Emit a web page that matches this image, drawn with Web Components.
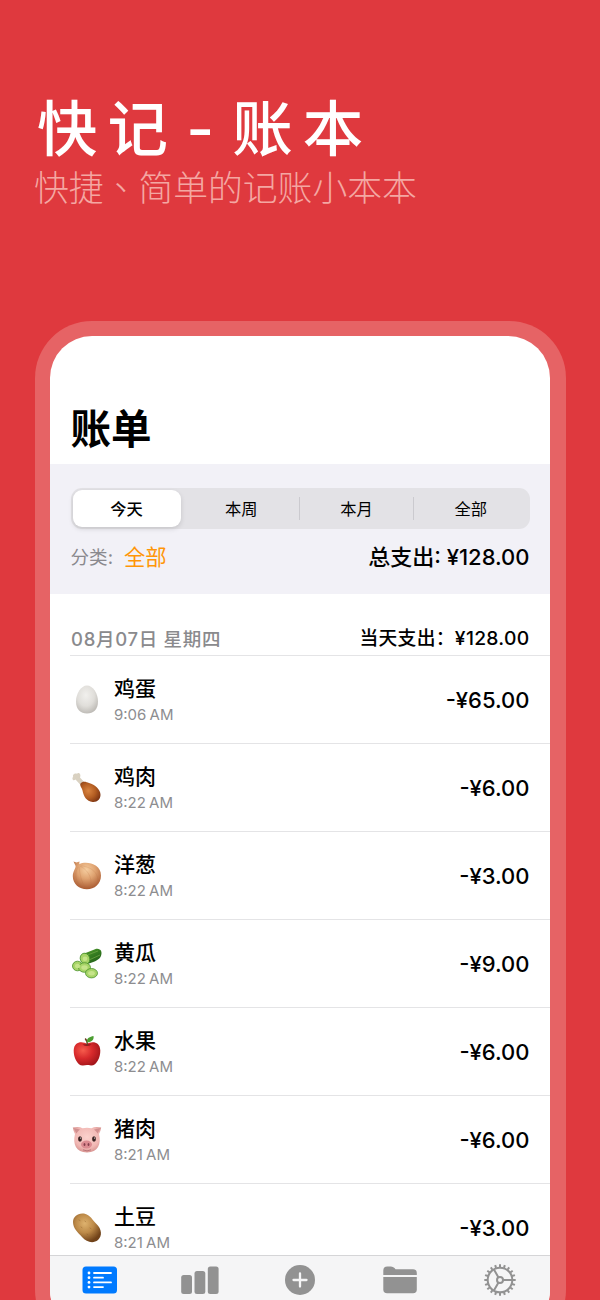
<!DOCTYPE html>
<html lang="zh-CN">
<head>
<meta charset="UTF-8">
<title>快记 - 账本</title>
<style>
    html, body {
        margin: 0;
        width: 600px;
        height: 1300px;
        overflow: hidden;
    }

    body {
        background: #df393e;
        color: #000;
        font-family: Inter, "Noto Sans CJK SC", sans-serif;
    }
</style>
</head>
<body>
<promo-page>
    <promo-title slot="title" heading="快记 - 账本" subtitle="快捷、简单的记账小本本"></promo-title>
    <phone-frame>
        <page-heading>账单</page-heading>
        <filter-panel total="¥128.00" category="全部"></filter-panel>
        <day-header total="¥128.00">08月07日 星期四</day-header>
        <bill-row icon="egg" name="鸡蛋" time="9:06 AM" amount="-¥65.00"></bill-row>
        <bill-row icon="leg" name="鸡肉" time="8:22 AM" amount="-¥6.00"></bill-row>
        <bill-row icon="onion" name="洋葱" time="8:22 AM" amount="-¥3.00"></bill-row>
        <bill-row icon="cucumber" name="黄瓜" time="8:22 AM" amount="-¥9.00"></bill-row>
        <bill-row icon="apple" name="水果" time="8:22 AM" amount="-¥6.00"></bill-row>
        <bill-row icon="pig" name="猪肉" time="8:21 AM" amount="-¥6.00"></bill-row>
        <bill-row icon="potato" name="土豆" time="8:21 AM" amount="-¥3.00"></bill-row>
        <tab-bar slot="tabs"></tab-bar>
    </phone-frame>
</promo-page>

<script>
// 食物图标，统一 30x30 画布
const FOOD = {
    egg: `
        <defs><radialGradient id="g" cx=".45" cy=".35" r=".7"><stop offset="0" stop-color="#f1f0ed"/><stop offset=".55" stop-color="#e0deda"/><stop offset="1" stop-color="#b9b6b1"/></radialGradient></defs>
        <path d="M15 .5C21 .5 26 8.500 26 16.500S21.500 28.500 15 28.500 4 24.500 4 16.500 9 .5 15 .5Z" fill="url(#g)"/>`,
    leg: `
        <defs><radialGradient id="g" cx=".4" cy=".45" r=".65"><stop offset="0" stop-color="#d98440"/><stop offset=".55" stop-color="#b35d22"/><stop offset="1" stop-color="#7c3412"/></radialGradient></defs>
        <path d="M3.500 6.500 9.500 13l3.500-3L8 4.500C9.600 1.500 6.500-1.300 5 .8 2.700-.4.1 2 1.200 3.800-.7 6 1.500 8.600 3.500 6.500Z" fill="#d9d1c1"/>
        <path d="M8.500 10.500C10.500 7.800 14 8.500 17 10 23 11.500 28.500 16.500 28.500 21.800 28.500 26.500 25 29.500 20.600 29 14.500 28.500 11.500 23 10.500 17.500 10 14.800 7.500 13 8.500 10.500Z" fill="url(#g)"/>`,
    onion: `
        <defs><radialGradient id="g" cx=".48" cy=".3" r=".7"><stop offset="0" stop-color="#f6cea0"/><stop offset=".45" stop-color="#e0a472"/><stop offset="1" stop-color="#a95a31"/></radialGradient></defs>
        <path d="M1.500.5 4.500 1.500 7.500.5 7.300 3.200C14-.2 29 2.500 29 14.500 29 23 22.500 28.300 14.900 28.300S.8 23 .8 15.300C.8 10.500 3.800 7.500 3.600 5Z" fill="url(#g)"/>
        <g fill="none" stroke="#b66b3c" stroke-width=".5" opacity=".35"><path d="M6 6C1 15 5 23 12 28M7 5.500C8 15 10 24 15 28M8 5C18 10 21 20 18 28M9 4.800C22 6 28 15 25 23"/></g>`,
    cucumber: `
        <defs><linearGradient id="g" x1="0" y1="0" x2=".7" y2="1"><stop offset="0" stop-color="#6cad39"/><stop offset=".4" stop-color="#3a8422"/><stop offset="1" stop-color="#1f5c18"/></linearGradient></defs>
        <path d="M11 5 23 .2C28-1.500 31.300 2.500 28.500 8 26.500 11.500 21 13 14.500 15.500Z" fill="url(#g)"/>
        <path d="M14 6.500 26 2M17 11l11-5" stroke="#76aa49" stroke-width=".7"/>
        <g fill="#a7d467" stroke="#4a922c" stroke-width=".8"><ellipse cx="13" cy="9.700" rx="4.700" ry="5.600" transform="rotate(-20 13 9.700)"/><ellipse cx="5.500" cy="17" rx="5" ry="4.800"/><ellipse cx="12.500" cy="18.500" rx="6" ry="4.800"/><ellipse cx="19.500" cy="24.200" rx="6" ry="4.700"/></g>
        <g fill="#c6e48a"><circle cx="13" cy="9.700" r="2.300"/><ellipse cx="5.500" cy="17" rx="2.600" ry="2.200"/><ellipse cx="12.500" cy="18.500" rx="3.200" ry="2.300"/><ellipse cx="19.500" cy="24.200" rx="3.300" ry="2.200"/></g>`,
    apple: `
        <defs><radialGradient id="g" cx=".35" cy=".35" r=".7"><stop offset="0" stop-color="#f65c4c"/><stop offset=".5" stop-color="#d82a2c"/><stop offset="1" stop-color="#a3151a"/></radialGradient></defs>
        <path d="M15 7C18 4.500 28 3 28.300 13.500 28.500 20.500 24.500 28.800 19 28.500 17 28.300 16.500 28 15 28S12.500 28.300 11 28.500C5.500 28.800 1.500 20.500 1.700 13.500 2 3 12 4.500 15 7Z" fill="url(#g)"/>
        <path d="M10.500 7.500Q15 10.500 19.500 7.500 16 6.500 10.500 7.500Z" fill="#97171c"/>
        <path d="M15.300 8.500Q15.500 4 13.200 1.500" stroke="#6b3e22" stroke-width="1.500" fill="none"/>
        <path d="M14.800 5.500C14.500.8 18 0 21.500-.9 22.500 3.500 18.500 5.600 14.800 5.500Z" fill="#4c9e32"/>`,
    pig: `
        <defs><radialGradient id="g" cx=".5" cy=".4" r=".65"><stop offset="0" stop-color="#fbd2cd"/><stop offset=".65" stop-color="#f1b8b4"/><stop offset="1" stop-color="#d18b88"/></radialGradient></defs>
        <path d="M.8 2.500Q7 1 10.500 3.200 15 2.200 19.500 3.200 23 1 29.200 2.500 28.500 6.500 27 9C29.500 19 26 27.500 15 27.500S.5 19 3 9Q1.500 6.500.8 2.500Z" fill="url(#g)"/>
        <path d="M1.800 3.300 8 4.500Q6 6 4.300 8.500ZM28.200 3.300 22 4.500Q24 6 25.700 8.500Z" fill="#d18f8f"/>
        <ellipse cx="8" cy="14" rx="1.900" ry="2.700" fill="#392322"/><ellipse cx="22" cy="14" rx="1.900" ry="2.700" fill="#392322"/>
        <circle cx="8.500" cy="13" r=".6" fill="#fff"/><circle cx="22.500" cy="13" r=".6" fill="#fff"/>
        <ellipse cx="14.500" cy="19.500" rx="5.500" ry="4" fill="#dc8b91"/>
        <ellipse cx="12.500" cy="19.500" rx=".9" ry="1.600" fill="#853f4b"/><ellipse cx="16.500" cy="19.500" rx=".9" ry="1.600" fill="#853f4b"/>
        <path d="M11 24.800Q15 27 19 24.800" stroke="#b0686d" stroke-width=".8" fill="none"/>`,
    potato: `
        <defs><radialGradient id="g" cx=".42" cy=".35" r=".65"><stop offset="0" stop-color="#deb26e"/><stop offset=".5" stop-color="#bd8a48"/><stop offset="1" stop-color="#704219"/></radialGradient></defs>
        <path d="M1 9C1 3.500 6-.3 12 .6 18.500 1.800 20.500 7.500 24.500 11 29.800 16 30.500 23 26 27 21 31 14.500 29 10 24 6 19.500 1 15.500 1 9Z" fill="url(#g)"/>
        <g stroke="#8e5f2b" stroke-width=".7" stroke-linecap="round" opacity=".6"><path d="m7 7 1 .5M13 8l.6.8M9 14l1 .7M18 15l1 .7M21 22l1 .6M15 21l.8.7"/></g>`
};

class PromoPage extends HTMLElement {
    constructor() {
        super();
        this.attachShadow({ mode: 'open' }).innerHTML = `
            <style>
                :host {
                    display: flex;
                    flex-direction: column;
                    align-items: center;
                    width: 600px;
                }
                header {
                    box-sizing: border-box;
                    width: 100%;
                    height: 321px;
                    padding: 95px 0 0 34px;
                }
            </style>
            <header><slot name="title"></slot></header>
            <slot></slot>
        `;
    }
}

class PromoTitle extends HTMLElement {
    connectedCallback() {
        this.attachShadow({ mode: 'open' }).innerHTML = `
            <style>
                :host { display: block; color: #fff; }
                h1 {
                    margin: 0 0 6px 3px;
                    height: 68px;
                    font: 500 60.500px/68px "Kaiti SC", STKaiti, KaiTi, Inter, "Noto Sans CJK SC", sans-serif;
                    letter-spacing: 10px;
                    word-spacing: -18px;
                    white-space: nowrap;
                }
                p {
                    margin: 0;
                    font: 300 34.800px/40px "Liberation Sans", "Noto Sans CJK TC", sans-serif;
                    color: #f4a7a2;
                    white-space: nowrap;
                }
            </style>
            <h1>${this.getAttribute('heading')}</h1>
            <p lang="zh-TW">${this.getAttribute('subtitle')}</p>
        `;
    }
}

class PhoneFrame extends HTMLElement {
    constructor() {
        super();
        this.attachShadow({ mode: 'open' }).innerHTML = `
            <style>
                :host {
                    display: block;
                    box-sizing: border-box;
                    width: 531px;
                    height: 1026px;
                    padding: 15px 15.5px;
                    border-radius: 57px;
                    background: #e66365;
                }
                .screen {
                    display: flex;
                    flex-direction: column;
                    height: 996px;
                    border-radius: 42px;
                    background: #fff;
                    overflow: hidden;
                }
                .list { height: 919px; overflow: hidden; }
            </style>
            <div class="screen">
                <div class="list"><slot></slot></div>
                <slot name="tabs"></slot>
            </div>
        `;
    }
}

class PageHeading extends HTMLElement {
    constructor() {
        super();
        this.attachShadow({ mode: 'open' }).innerHTML = `
            <style>
                :host {
                    display: block;
                    box-sizing: border-box;
                    height: 128px;
                    padding: 64px 20.500px 0;
                    font-size: 40.500px;
                    font-weight: 700;
                    line-height: 60px;
                }
            </style>
            <slot></slot>
        `;
    }
}

class FilterPanel extends HTMLElement {
    connectedCallback() {
        const tabs = ['今天', '本周', '本月', '全部'];
        this.attachShadow({ mode: 'open' }).innerHTML = `
            <style>
                :host {
                    display: block;
                    box-sizing: border-box;
                    height: 130px;
                    padding: 24px 20.500px 0 20.500px;
                    background: #f2f1f7;
                }
                .segments {
                    display: grid;
                    grid-template-columns: 112px repeat(3, 1fr);
                    box-sizing: border-box;
                    height: 41px;
                    padding: 2px;
                    border-radius: 11px;
                    background: #e3e2e6;
                }
                .segments span {
                    display: flex;
                    align-items: center;
                    justify-content: center;
                    padding: 0 0 1.500px 0;
                    font-size: 16.300px;
                    border-left: 1px solid transparent;
                    border-image: linear-gradient(transparent 20%, #cbcacf 20%, #cbcacf 80%, transparent 80%) 1;
                }
                .segments span:nth-child(-n+2) { border-image: none; }
                .segments span:nth-child(2) { padding-right: 2px; }
                .segments .on {
                    margin-right: 4px;
                    border: 0;
                    border-radius: 9px;
                    background: #fff;
                    box-shadow: 0 2px 5px rgba(0, 0, 0, .13);
                    font-weight: 500;
                }
                .summary {
                    display: flex;
                    align-items: center;
                    height: 53px;
                    font-size: 21.300px;
                }
                .label { color: #8a898e; font-size: 18.600px; }
                .category { margin-left: 11px; color: #ff9608; }
                .total { margin: 0 0 1px auto; font-size: 22px; font-weight: 500; }
            </style>
            <div class="segments">
                ${tabs.map((t, i) => `<span class="${i ? '' : 'on'}">${t}</span>`).join('')}
            </div>
            <div class="summary">
                <span class="label">分类:</span>
                <span class="category">${this.getAttribute('category')}</span>
                <span class="total">总支出: ${this.getAttribute('total')}</span>
            </div>
        `;
    }
}

class DayHeader extends HTMLElement {
    connectedCallback() {
        this.attachShadow({ mode: 'open' }).innerHTML = `
            <style>
                :host {
                    display: flex;
                    align-items: flex-end;
                    justify-content: space-between;
                    box-sizing: border-box;
                    height: 62px;
                    margin-left: 20px;
                    padding: 0 20.500px 2px 0;
                    border-bottom: 1px solid #e4e4e6;
                    font-weight: 500;
                    line-height: 28px;
                }
                .date { margin-left: 1px; font-size: 18.500px; color: #8a8a8d; letter-spacing: .7px; }
                .sum { font-size: 18.800px; letter-spacing: .3px; }
                b { font-weight: 500; font-size: 19.300px; }
            </style>
            <span class="date"><slot></slot></span>
            <span class="sum">当天支出：<b>${this.getAttribute('total')}</b></span>
        `;
    }
}

class BillRow extends HTMLElement {
    connectedCallback() {
        this.attachShadow({ mode: 'open' }).innerHTML = `
            <style>
                :host {
                    display: flex;
                    align-items: center;
                    box-sizing: border-box;
                    height: 88px;
                    margin-left: 20px;
                    padding-right: 20.500px;
                    border-bottom: 1px solid #e4e4e6;
                }
                svg { width: 30px; height: 30px; margin-left: 2px; overflow: visible; }
                .text { margin-left: 12px; }
                .name { font-size: 21px; font-weight: 500; line-height: 30px; }
                .time { font-size: 15px; line-height: 22px; color: #8d8d90; word-spacing: -1px; }
                .amount { margin-left: auto; font-size: 22px; font-weight: 550; }
            </style>
            <svg viewBox="0 0 30 30">${FOOD[this.getAttribute('icon')]}</svg>
            <div class="text">
                <div class="name">${this.getAttribute('name')}</div>
                <div class="time">${this.getAttribute('time')}</div>
            </div>
            <span class="amount">${this.getAttribute('amount')}</span>
        `;
    }
}

class TabBar extends HTMLElement {
    constructor() {
        super();
        // 齿轮外圈的齿
        let teeth = '';
        for (let i = 0; i < 20; i++) {
            teeth += `<path d="M18 2.300v3" transform="rotate(${i * 18} 18 18)"/>`;
        }
        this.attachShadow({ mode: 'open' }).innerHTML = `
            <style>
                :host {
                    display: grid;
                    grid-template-columns: repeat(5, 1fr);
                    justify-items: center;
                    box-sizing: border-box;
                    height: 77px;
                    padding-top: 6px;
                    border-top: 1px solid #d5d5d7;
                    background: #f5f5f6;
                    color: #929292;
                }
                svg { width: 40px; height: 36px; fill: currentColor; }
                .active { color: #007aff; }
            </style>
            <svg class="active" viewBox="0 0 40 36">
                <rect x="2.500" y="4.500" width="34.500" height="27" rx="3.500"/>
                <g stroke="#fff" stroke-width="1.800" stroke-linecap="round"><path d="M14 11h17M14 15.700h9M14 20.400h17M14 25.100h9"/></g>
                <g fill="#fff"><circle cx="9" cy="11" r="1.400"/><circle cx="9" cy="15.700" r="1.400"/><circle cx="9" cy="20.400" r="1.400"/><circle cx="9" cy="25.100" r="1.400"/></g>
            </svg>
            <svg viewBox="0 0 40 36">
                <rect x="1.200" y="13" width="10.800" height="19" rx="2.500"/>
                <rect x="14.500" y="9" width="10.800" height="23" rx="2.500"/>
                <rect x="27.800" y="4.500" width="10.800" height="27.500" rx="2.500"/>
            </svg>
            <svg viewBox="0 0 40 36">
                <circle cx="20" cy="18" r="15"/>
                <path d="M20 11.500v13M13.500 18h13" stroke="#f5f5f6" stroke-width="2.300" stroke-linecap="round"/>
            </svg>
            <svg viewBox="0 0 40 36">
                <path d="M3.300 13V8.500Q3.300 4.500 7.300 4.500H11Q13 4.500 14.500 6L15.500 7.200H33Q36.800 7.200 36.800 11V13Z"/>
                <path d="M3.300 15H36.800V27.500Q36.800 31.300 33 31.300H7.100Q3.300 31.300 3.300 27.500Z"/>
            </svg>
            <svg viewBox="-2 0 40 36" style="fill:none;stroke:currentColor;stroke-width:2">
                ${teeth}
                <circle cx="18" cy="18" r="12.300"/>
                <circle cx="18" cy="18" r="3"/>
                <path d="M21 18H30M16.500 15.400 11.900 7.400M16.500 20.600 11.900 28.600"/>
            </svg>
        `;
    }
}

customElements.define('promo-page', PromoPage);
customElements.define('promo-title', PromoTitle);
customElements.define('phone-frame', PhoneFrame);
customElements.define('page-heading', PageHeading);
customElements.define('filter-panel', FilterPanel);
customElements.define('day-header', DayHeader);
customElements.define('bill-row', BillRow);
customElements.define('tab-bar', TabBar);
</script>
</body>
</html>
